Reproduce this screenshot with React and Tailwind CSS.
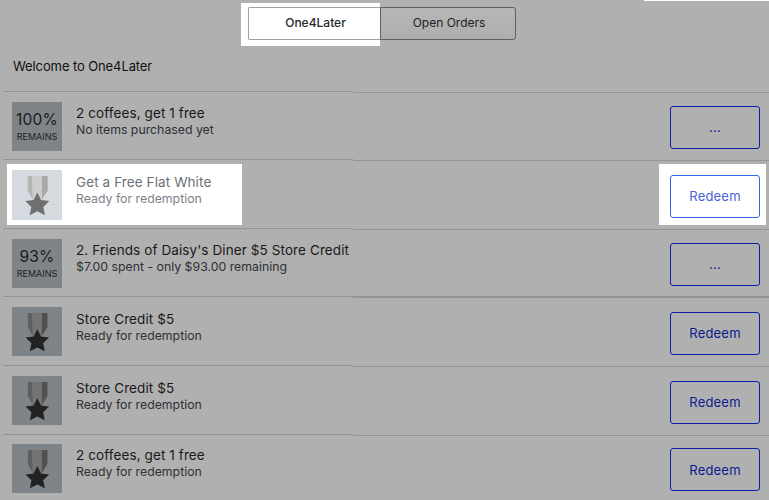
import React from 'react';

const rows = [
  { id: 1, title: '2 coffees, get 1 free', sub: 'No items purchased yet', pct: '100%', action: '...', height: 'h-[68px]' },
  { id: 2, title: 'Get a Free Flat White', sub: 'Ready for redemption', action: 'Redeem', lit: true, height: 'h-[69px]' },
  { id: 3, title: "2. Friends of Daisy's Diner $5 Store Credit", sub: '$7.00 spent - only $93.00 remaining', pct: '93%', action: '...', height: 'h-[68px]' },
  { id: 4, title: 'Store Credit $5', sub: 'Ready for redemption', action: 'Redeem', thick: true, height: 'h-[69px]' },
  { id: 5, title: 'Store Credit $5', sub: 'Ready for redemption', action: 'Redeem', height: 'h-[69px]' },
  { id: 6, title: '2 coffees, get 1 free', sub: 'Ready for redemption', action: 'Redeem', height: 'h-[66px]' },
];

function Medal({ lit }) {
  const c = lit
    ? { a: '#b4b4b4', b: '#cdcdcd', d: '#a9a9a9', star: '#6f6f6f' }
    : { a: '#5f5f5f', b: '#747474', d: '#515151', star: '#222222' };
  return (
    <svg width="50" height="50" viewBox="0 0 50 50">
      <path d="M15.7 6h4.8v14.5l4.5 9-4.5 0-4.8-9z" fill={c.a} />
      <path d="M20.5 6h9.5v24h-9.5z" fill={c.b} />
      <path d="M30 6h5.7v14.5l-5.7 9z" fill={c.d} />
      <path d="M25.3 22.5l3.7 7.6 8.3 1-6 5.8 1.6 8.3-7.6-4-7.6 4 1.6-8.3-6-5.8 8.3-1z" fill={c.star} />
    </svg>
  );
}

function Badge({ row }) {
  const base = `w-[50px] shrink-0 flex flex-col items-center justify-center ${row.lit ? 'bg-[#d5dae0] h-[50px]' : 'bg-[#7f8489] h-[49px]'}`;
  if (row.pct) {
    return (
      <div className={`${base} pt-[2px]`}>
        <span className="text-[15.5px] leading-[18px] tracking-[0.2px] text-[#1a1a1a]">{row.pct}</span>
        <span className="text-[9px] leading-[14px] text-[#1f2024] mt-[1px]">REMAINS</span>
      </div>
    );
  }
  return (
    <div className={base}>
      <Medal lit={row.lit} />
    </div>
  );
}

function Row({ row }) {
  return (
    <div className={`${row.height} flex flex-col`}>
      <div className="h-[2px] shrink-0 flex items-start">
        <div className="w-[350px] h-px bg-[#8f9499]" />
        <div className={`flex-1 bg-[#8f9499] ${row.thick ? 'h-[2px]' : 'h-px mt-px'}`} />
      </div>
      <div className="flex-1 min-h-0 flex items-center justify-between pr-[3px]">
        <div className={`ml-[4px] pl-[5px] w-[235px] h-[61px] flex items-center gap-[14px] ${row.lit ? 'bg-white' : ''}`}>
          <Badge row={row} />
          <div className="mb-[9px] whitespace-nowrap">
            <div className={`text-[13.5px] leading-[17px] tracking-[0.1px] ${row.lit ? 'text-[#6c7075]' : 'text-[#191919]'}`}>{row.title}</div>
            <div className={`text-[12.3px] leading-[16px] ${row.lit ? 'text-[#7d8288]' : 'text-[#2e3033]'}`}>{row.sub}</div>
          </div>
        </div>
        <div className={`w-[107px] h-[61px] pl-[11px] flex items-center ${row.lit ? 'bg-white' : ''}`}>
          <button className={`mt-[3px] w-[90px] h-[43px] rounded-[3px] border-[1.5px] text-[13px] tracking-[0.2px] ${row.action === 'Redeem' ? 'pt-[2px]' : ''} ${row.lit ? 'border-[#3069e6] text-[#4a62df]' : 'border-[#0a209e] text-[#0d1c8c]'}`}>
            {row.action}
          </button>
        </div>
      </div>
    </div>
  );
}

export default function App() {
  return (
    <div className="w-[769px] h-[500px] overflow-hidden bg-[#b0b0b0] font-['Inter','Liberation_Sans',sans-serif]">
      <div className="h-px flex justify-end">
        <div className="w-[125px] bg-white" />
      </div>
      <div className="mt-[2px] ml-[241px] flex items-start">
        <div className="w-[139px] h-[43px] bg-white pl-[7px] pt-[4px]">
          <div className="w-[132px] h-[33px] pb-[2px] pl-[2px] border-y border-l border-[#9aa3ab] rounded-l-[2px] flex items-center justify-center text-[12px] font-medium text-[#25272a]">
            One4Later
          </div>
        </div>
        <div className="mt-[4px] w-[136px] h-[33px] pb-[2px] pl-[2px] border border-[#59616a] rounded-r-[3px] bg-linear-to-b from-[#b6b6b6] to-[#aeaeae] flex items-center justify-center text-[12px] text-[#1f2124]">
          Open Orders
        </div>
      </div>
      <div className="h-[45px] px-[13px] pt-[12px] text-[13px] leading-[17px] tracking-[-0.1px] text-[#111111]">Welcome to One4Later</div>
      <div className="ml-[3px]">
        {rows.map((row) => (
          <Row key={row.id} row={row} />
        ))}
      </div>
    </div>
  );
}
